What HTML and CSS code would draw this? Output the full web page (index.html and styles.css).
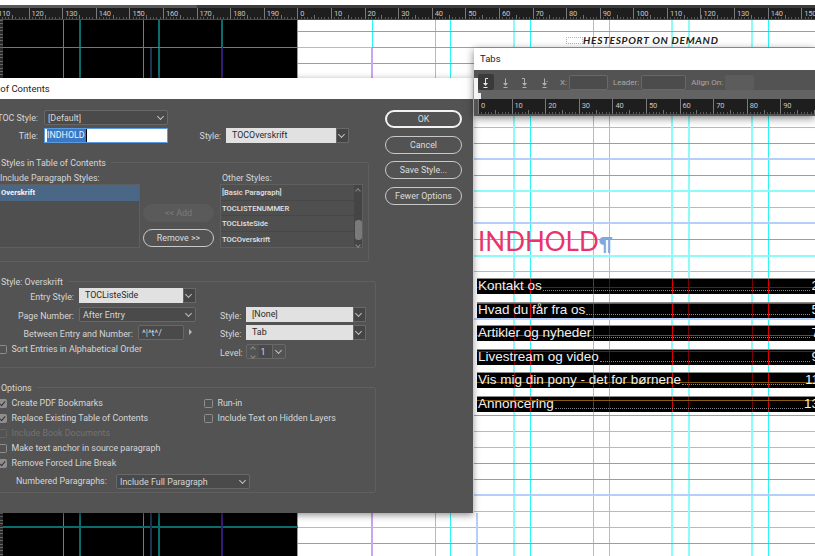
FILE: index.html
```
<!DOCTYPE html>
<html lang="da">
<head>
<meta charset="utf-8">
<title>Table of Contents</title>
<link rel="stylesheet" href="styles.css">
</head>
<body>

<div class="top-strip"></div>
<div class="ruler-cap"></div>
<div class="ruler-row">
  <div class="ruler main-ruler">
    <span class="tick">110</span><span class="tick">120</span><span class="tick">130</span><span class="tick">140</span><span class="tick">150</span><span class="tick">160</span><span class="tick">170</span><span class="tick">180</span><span class="tick">190</span><span class="tick">0</span><span class="tick">10</span><span class="tick">20</span><span class="tick">30</span><span class="tick">40</span><span class="tick">50</span><span class="tick">60</span><span class="tick">70</span><span class="tick">80</span><span class="tick">90</span><span class="tick">100</span><span class="tick">110</span><span class="tick">120</span><span class="tick">130</span><span class="tick">140</span><span class="tick">150</span>
  </div>
</div>

<div class="workspace">
  <div class="side-ruler"></div>
  <div class="pasteboard"></div>
  <div class="page">
    <div class="page-header"><span class="header-frame"></span><span class="header-text">HESTESPORT ON DEMAND</span></div>
    <div class="toc-title">INDHOLD<span class="pilcrow">¶</span></div>
    <div class="toc-row"><span>Kontakt os</span><span class="leader"></span><span>2</span></div>
    <div class="toc-row"><span>Hvad du får fra os</span><span class="leader"></span><span>5</span></div>
    <div class="toc-row"><span>Artikler og nyheder</span><span class="leader"></span><span>7</span></div>
    <div class="toc-row"><span>Livestream og video</span><span class="leader"></span><span>9</span></div>
    <div class="toc-row"><span>Vis mig din pony - det for børnene</span><span class="leader"></span><span>11</span></div>
    <div class="toc-row"><span>Annoncering</span><span class="leader"></span><span>13</span></div>
  </div>
</div>

<!-- layout guides, below the text rows and the windows -->
<svg class="guides" width="815" height="556">
  <path class="g-black-cyan" d="M63.5 20V78M143.5 20V78M63.5 513V556M143.5 513V556M222 47.5H298"/>
  <path class="g-black-teal" d="M80 20V78M159 20V78M222 20V47M80 513V556M159 513V556M3 527H298"/>
  <path class="g-black-navy" d="M151 47V78M151 513V556"/>
  <path class="g-black-purple" d="M222 47V78M222 513V556"/>
  <path class="g-black-magenta" d="M3 47.5H222"/>
  <path class="g-cyan" d="M372.5 20V47M435.5 20V556M450.5 20V556M530.5 20V556M593.5 20V556M609.5 20V556M768.5 20V556M298 47.5H372M474 127.5H815M474 207.5H815M474 271.5H815M474 431.5H815M474 447.5H815M474 511.5H815M298 527.5H815"/>
  <path class="g-cyan-light" d="M514 20V556M672 20V556M689 20V556M752 20V556M474 191H815M474 255.5H815"/>
  <path class="g-blue" d="M298 31.5H815M298 63.5H474M474 143.5H815M474 175.5H815M474 239.5H815M474 415.5H815M474 463.5H815M474 479.5H815M298 543.5H815"/>
  <path class="g-blue-light" d="M474 159H815M474 223H815M474 319H815M474 495H815M477 513V556"/>
  <path class="g-purple" d="M372 47V556"/>
  <path class="g-magenta" d="M372 47.5H815"/>
</svg>

<!-- Table of Contents dialog -->
<div class="dialog">
  <div class="dialog-title">Table of Contents</div>
  <div class="dialog-body">
    <div class="dialog-main">

      <div class="top-row">
        <label class="top-label">TOC Style:</label>
        <div class="select dark title-field">[Default]</div>
      </div>
      <div class="top-row second">
        <label class="top-label">Title:</label>
        <div class="title-input"><span class="selected-text">INDHOLD</span></div>
        <label class="top-style-label">Style:</label>
        <div class="combo title-combo"><span class="combo-text">TOCOverskrift</span><span class="combo-arrow"></span></div>
      </div>

      <div class="group styles-group">
        <div class="group-title">Styles in Table of Contents</div>
        <div class="styles-columns">
          <div class="include-col">
            <div class="list-label">Include Paragraph Styles:</div>
            <div class="list include-list"><div class="list-item picked">Overskrift</div></div>
          </div>
          <div class="move-buttons">
            <div class="button disabled">&lt;&lt; Add</div>
            <div class="button">Remove &gt;&gt;</div>
          </div>
          <div class="other-col">
            <div class="list-label">Other Styles:</div>
            <div class="list other-list">
              <div class="other-items">
                <div class="list-item">[Basic Paragraph]</div>
                <div class="list-item">TOCLISTENUMMER</div>
                <div class="list-item">TOCListeSide</div>
                <div class="list-item">TOCOverskrift</div>
              </div>
              <div class="scrollbar"><span class="scroll-up"></span><span class="scroll-thumb"></span><span class="scroll-down"></span></div>
            </div>
          </div>
        </div>
      </div>

      <div class="group entry-group">
        <div class="group-title">Style: Overskrift</div>
        <div class="entry-grid">
          <div class="entry-row"><label class="entry-label">Entry Style:</label><div class="combo entry-combo"><span class="combo-text">TOCListeSide</span><span class="combo-arrow"></span></div></div>
          <div></div>
          <div class="entry-row"><label class="entry-label">Page Number:</label><div class="select dark page-field">After Entry</div></div>
          <div class="entry-row"><label class="style-label">Style:</label><div class="combo wide-combo"><span class="combo-text">[None]</span><span class="combo-arrow"></span></div></div>
          <div class="entry-row"><label class="between-label">Between Entry and Number:</label><div class="text-field">^|^t^/</div><span class="play"></span></div>
          <div class="entry-row"><label class="style-label">Style:</label><div class="combo wide-combo"><span class="combo-text">Tab</span><span class="combo-arrow"></span></div></div>
          <div class="check-row sort-row"><span class="check"></span>Sort Entries in Alphabetical Order</div>
          <div class="entry-row">
            <label class="style-label">Level:</label>
            <div class="level">
              <span class="level-spin"><span class="spin-up"></span><span class="spin-down"></span></span>
              <span class="level-value">1</span>
              <span class="combo-arrow"></span>
            </div>
          </div>
        </div>
      </div>

      <div class="group options-group">
        <div class="group-title">Options</div>
        <div class="options-grid">
          <div class="check-row"><span class="check on"></span>Create PDF Bookmarks</div>
          <div class="check-row"><span class="check"></span>Run-in</div>
          <div class="check-row"><span class="check on"></span>Replace Existing Table of Contents</div>
          <div class="check-row"><span class="check"></span>Include Text on Hidden Layers</div>
          <div class="check-row off"><span class="check"></span>Include Book Documents</div>
          <div></div>
          <div class="check-row"><span class="check"></span>Make text anchor in source paragraph</div>
          <div></div>
          <div class="check-row"><span class="check on"></span>Remove Forced Line Break</div>
        </div>
        <div class="numbered-row">
          <label>Numbered Paragraphs:</label>
          <div class="select dark numbered-field">Include Full Paragraph</div>
        </div>
      </div>

    </div>
    <div class="dialog-buttons">
      <div class="button default">OK</div>
      <div class="button">Cancel</div>
      <div class="button">Save Style...</div>
      <div class="button">Fewer Options</div>
    </div>
  </div>
</div>

<!-- Tabs panel -->
<div class="tabs-panel">
  <div class="tabs-title">Tabs</div>
  <div class="tabs-body">
    <div class="tabs-tools">
      <span class="tab-icon active"><svg width="16" height="16" viewBox="0 0 16 16"><path d="M10 4.5H7.5V10M5.5 13.5h4"/><path class="head" d="M5 9h5l-2.5 3z"/></svg></span>
      <span class="tab-icon"><svg width="16" height="16" viewBox="0 0 16 16"><path d="M7.5 4.5V10M5.5 13.5h4"/><path class="head" d="M5 9h5l-2.5 3z"/></svg></span>
      <span class="tab-icon"><svg width="16" height="16" viewBox="0 0 16 16"><path d="M5 4.5H7.5V10M5.5 13.5h4"/><path class="head" d="M5 9h5l-2.5 3z"/></svg></span>
      <span class="tab-icon"><svg width="16" height="16" viewBox="0 0 16 16"><path d="M7.5 4.5V10M5.5 13.5h4M9.5 7.5h1"/><path class="head" d="M5 9h5l-2.5 3z"/></svg></span>
      <label class="tabs-x">X:</label><span class="tabs-input x-input"></span>
      <label class="tabs-label">Leader:</label><span class="tabs-input leader-input"></span>
      <label class="tabs-label">Align On:</label><span class="tabs-input align-input"></span>
    </div>
    <div class="tabs-strip"><span class="tab-marker"></span></div>
    <div class="ruler tabs-ruler">
      <span class="tick">0</span><span class="tick">10</span><span class="tick">20</span><span class="tick">30</span><span class="tick">40</span><span class="tick">50</span><span class="tick">60</span><span class="tick">70</span><span class="tick">80</span><span class="tick">90</span>
    </div>
  </div>
</div>

</body>
</html>
```

FILE: styles.css
```
html, body
  {
	margin : 0;
	padding : 0;
  } /*html, body*/
body
  {
	position : relative;
	width : 815px;
	height : 556px;
	overflow : hidden;
	background-color : #FFFFFF;
	font-family : "Roboto", "Liberation Sans", sans-serif;
  } /*body*/

/* top of the document window */
div.top-strip
  {
	height : 5px;
  } /*div.top-strip*/
div.ruler-cap
  {
	height : 3px;
	background : linear-gradient(to right, #585858 197px, #3C3C3C 197px);
  } /*div.ruler-cap*/
div.ruler-row
  {
	height : 12px;
	padding-left : 3px;
	background-color : #4A4A4A;
	overflow : hidden;
  } /*div.ruler-row*/

div.ruler
  {
	display : flex;
	overflow : hidden;
	background-color : #1E1E1E;
	background-image :
		repeating-linear-gradient(to right, #707070 0, #707070 1px, transparent 1px, transparent 16.8px),
		repeating-linear-gradient(to right, #565656 0, #565656 1px, transparent 1px, transparent 3.36px);
	background-repeat : no-repeat;
	background-size : 100% 4px, 100% 2px;
	background-position : left bottom;
  } /*div.ruler*/
div.main-ruler
  {
	height : 10.5px;
	margin-left : -8px;
  } /*div.main-ruler*/
span.tick
  {
	flex : 0 0 33.6px;
	box-sizing : border-box;
	padding-left : 2px;
	border-left : 1px solid #7A7A7A;
	color : #C4C4C4;
	font-size : 7.5px;
	letter-spacing : -0.2px;
	line-height : 11px;
  } /*span.tick*/

div.workspace
  {
	display : flex;
	height : 536px;
  } /*div.workspace*/
div.side-ruler
  {
	width : 3px;
	background-color : #2A2A2A;
	background-image : repeating-linear-gradient(to bottom, #666666 0, #666666 1px, transparent 1px, transparent 3.4px);
  } /*div.side-ruler*/
div.pasteboard
  {
	width : 295px;
	background-color : #000000;
  } /*div.pasteboard*/

div.page
  {
	flex : 1;
	padding-left : 179px;
	background-color : #FFFFFF;
	border-left : 1px solid #7DA0D0;
	margin-left : -1px;
  } /*div.page*/
div.page-header
  {
	position : relative;
	z-index : 1;
	display : flex;
	align-items : center;
	height : 12px;
	margin-top : 14px;
	margin-left : 89px;
	white-space : nowrap;
  } /*div.page-header*/
span.header-frame
  {
	width : 17px;
	height : 7px;
	border : 1px dotted #9DB6DC;
	box-sizing : border-box;
  } /*span.header-frame*/
span.header-text
  {
	font-family : "Lato", sans-serif;
	font-weight : bold;
	font-style : italic;
	font-size : 10.2px;
	letter-spacing : 0.7px;
	color : #222222;
  } /*span.header-text*/

div.toc-title
  {
	position : relative;
	z-index : 1;
	margin-top : 180px;
	height : 52px;
	padding-left : 1px;
	font-family : "Lato", sans-serif;
	font-size : 26px;
	line-height : 30px;
	color : #E8336D;
  } /*div.toc-title*/
span.pilcrow
  {
	font-size : 19px;
	font-weight : bold;
	color : #7FA8E0;
  } /*span.pilcrow*/

div.toc-row
  {
	position : relative;
	z-index : 1;
	display : flex;
	height : 16px;
	margin : 0 -4px 7.5px 0;
	padding-left : 1px;
	font-family : "Liberation Sans", sans-serif;
	font-size : 13.5px;
	line-height : 16px;
	color : #F0F0F0;
	white-space : nowrap;
	--guide : #7A1010;
	--guide-y : 9px;
	background-color : #000000;
	background-image :
		linear-gradient(#8A8A8A, #8A8A8A),
		linear-gradient(var(--guide), var(--guide)),
		linear-gradient(#7A0000, #7A0000),
		linear-gradient(#E00000, #E00000),
		linear-gradient(#E00000, #E00000),
		linear-gradient(#7A0000, #7A0000),
		linear-gradient(#E00000, #E00000),
		linear-gradient(#7A0000, #7A0000),
		linear-gradient(#7A0000, #7A0000),
		linear-gradient(#E00000, #E00000);
	background-repeat : no-repeat;
	background-size : 100% 1px, 100% 1px, 1px 100%, 1px 100%, 1px 100%, 1px 100%, 1px 100%, 1px 100%, 1px 100%, 1px 100%;
	background-position : 0 0, 0 var(--guide-y), 37px 0, 53px 0, 116px 0, 132px 0, 195px 0, 211px 0, 275px 0, 291px 0;
  } /*div.toc-row*/
div.toc-row:nth-child(4) { --guide : #8A5A10; --guide-y : 1px; }
div.toc-row:nth-child(5) { --guide : #6A5010; --guide-y : 10px; }
div.toc-row:nth-child(6) { --guide : #7A1010; --guide-y : 2px; }
div.toc-row:nth-child(7) { --guide : #7A5510; --guide-y : 10px; }
div.toc-row:nth-child(8) { --guide : #8A5A10; --guide-y : 4px; }
span.leader
  {
	flex : 1;
	height : 12px;
	margin : 0 1px;
	border-bottom : 1px dotted #8A8A8A;
  } /*span.leader*/

/* guides */
svg.guides
  {
	position : absolute;
	left : 0;
	top : 0;
	fill : none;
	shape-rendering : crispEdges;
  } /*svg.guides*/
path.g-cyan { stroke : #2CF6F6; stroke-width : 1; }
path.g-cyan-light { stroke : #8FFAFA; stroke-width : 2; }
path.g-blue { stroke : #6CA4F6; stroke-width : 1; }
path.g-blue-light { stroke : #B4CFFA; stroke-width : 2; }
path.g-purple { stroke : #C9A6F2; stroke-width : 2; }
path.g-magenta { stroke : #E070E6; stroke-width : 1; }
path.g-black-cyan { stroke : #0CA8A8; stroke-width : 1; }
path.g-black-teal { stroke : #0A6C6C; stroke-width : 2; }
path.g-black-navy { stroke : #1E3454; stroke-width : 2; }
path.g-black-purple { stroke : #361A78; stroke-width : 2; }
path.g-black-magenta { stroke : #C43AD8; stroke-width : 1; }

/* the dialog */
div.dialog
  {
	position : absolute;
	z-index : 2;
	left : -40px;
	top : 78px;
	width : 513px;
	height : 435px;
	background-color : #535353;
	box-shadow : 0 2px 7px rgba(0, 0, 0, 0.45);
	color : #D6D6D6;
	font-size : 8.9px;
  } /*div.dialog*/
div.dialog-title
  {
	height : 21px;
	padding-left : 15px;
	background-color : #FFFFFF;
	color : #222222;
	font-size : 9.5px;
	line-height : 21px;
  } /*div.dialog-title*/
div.dialog-body
  {
	display : flex;
	padding : 11px 0 0 30px;
  } /*div.dialog-body*/
div.dialog-main
  {
	width : 386px;
  } /*div.dialog-main*/
div.dialog-buttons
  {
	display : flex;
	flex-direction : column;
	gap : 7.5px;
	width : 77px;
	margin-left : 9px;
  } /*div.dialog-buttons*/

div.button
  {
	box-sizing : border-box;
	height : 18px;
	border : 1px solid #C8C8C8;
	border-radius : 9px;
	text-align : center;
	line-height : 17px;
	color : #DCDCDC;
  } /*div.button*/
div.button.default
  {
	border : 2px solid #F2F2F2;
	line-height : 15px;
  } /*div.button.default*/
div.button.disabled
  {
	border-color : #5A5A5A;
	background-color : #5A5A5A;
	color : #7C7C7C;
  } /*div.button.disabled*/

div.top-row
  {
	display : flex;
	align-items : center;
	height : 15px;
  } /*div.top-row*/
div.top-row.second
  {
	margin-top : 3px;
  } /*div.top-row.second*/
label.top-label
  {
	width : 48px;
	margin-right : 6px;
	padding-top : 1px;
	text-align : right;
	white-space : nowrap;
  } /*label.top-label*/
label.top-style-label
  {
	width : 53px;
	margin-right : 5px;
	padding-top : 1px;
	text-align : right;
  } /*label.top-style-label*/

div.select
  {
	position : relative;
	box-sizing : border-box;
	height : 15px;
	padding-left : 3px;
	border : 1px solid #686868;
	border-radius : 2px;
	line-height : 14px;
	white-space : nowrap;
  } /*div.select*/
div.select.dark
  {
	background-color : #4A4A4A;
  } /*div.select.dark*/
div.select:after, span.combo-arrow:after
  {
	content : "";
	position : absolute;
	right : 4px;
	top : 3px;
	width : 4px;
	height : 4px;
	border-right : 1px solid #C0C0C0;
	border-bottom : 1px solid #C0C0C0;
	transform : rotate(45deg);
  } /*div.select:after*/
div.title-field { width : 124px; }
div.page-field { width : 117px; }
div.numbered-field { width : 134px; }

div.title-input
  {
	box-sizing : border-box;
	width : 124px;
	height : 15px;
	padding-left : 2px;
	border : 1px solid #5A9BE0;
	background-color : #FFFFFF;
	line-height : 13px;
  } /*div.title-input*/
span.selected-text
  {
	display : inline-block;
	padding-right : 1px;
	background-color : #3A78C4;
	border-right : 1px solid #000000;
	color : #EAF2FF;
  } /*span.selected-text*/

div.combo
  {
	display : flex;
	height : 15px;
	color : #2A2A2A;
  } /*div.combo*/
span.combo-text
  {
	flex : 1;
	box-sizing : border-box;
	padding-left : 6px;
	background-color : #E1E1E1;
	line-height : 15px;
  } /*span.combo-text*/
span.combo-arrow
  {
	position : relative;
	box-sizing : border-box;
	flex : 0 0 13px;
	border : 1px solid #686868;
	background-color : #454545;
  } /*span.combo-arrow*/
div.title-combo { width : 123px; }
div.entry-combo { width : 117px; }
div.wide-combo { width : 120px; }

div.group
  {
	box-sizing : border-box;
	border : 1px solid #5F5F5F;
	border-radius : 2px;
  } /*div.group*/
div.group-title
  {
	width : fit-content;
	height : 12px;
	margin : -7px 0 0 10px;
	padding-right : 5px;
	background-color : #535353;
	line-height : 15px;
  } /*div.group-title*/

div.styles-group
  {
	width : 379px;
	height : 100px;
	margin-top : 19px;
  } /*div.styles-group*/
div.styles-columns
  {
	display : flex;
	margin : 3px 0 0 8px;
  } /*div.styles-columns*/
div.list-label
  {
	height : 12px;
	line-height : 15px;
	padding-left : 1px;
	white-space : nowrap;
  } /*div.list-label*/
div.list
  {
	box-sizing : border-box;
	height : 64px;
	margin-top : 1px;
	border : 1px solid #5F5F5F;
	background-color : #4F4F4F;
  } /*div.list*/
div.include-col
  {
	width : 141px;
  } /*div.include-col*/
div.move-buttons
  {
	display : flex;
	flex-direction : column;
	gap : 7px;
	width : 71px;
	margin : 33px 0 0 3px;
  } /*div.move-buttons*/
div.other-col
  {
	width : 143px;
	margin-left : 6px;
  } /*div.other-col*/
div.other-col div.list-label
  {
	padding-left : 2px;
  } /*div.other-col div.list-label*/
div.other-list
  {
	display : flex;
  } /*div.other-list*/
div.other-items
  {
	flex : 1;
  } /*div.other-items*/
div.list-item
  {
	height : 15.5px;
	padding-left : 1px;
	box-sizing : border-box;
	border-bottom : 1px solid #474747;
	font-size : 7.6px;
	font-weight : 500;
	line-height : 15px;
	color : #E2E2E2;
  } /*div.list-item*/
div.list-item:last-child
  {
	border-bottom : none;
  } /*div.list-item:last-child*/
div.list-item.picked
  {
	background-color : #4A6886;
	border-bottom : none;
	font-weight : bold;
	color : #F4F4F4;
  } /*div.list-item.picked*/

div.scrollbar
  {
	position : relative;
	display : flex;
	flex-direction : column;
	align-items : center;
	width : 8px;
	background-color : #454545;
  } /*div.scrollbar*/
span.scroll-thumb
  {
	width : 7px;
	height : 21px;
	margin-top : 27px;
	border-radius : 3px;
	background-color : #7A7A7A;
  } /*span.scroll-thumb*/
span.scroll-up, span.scroll-down, span.spin-up, span.spin-down
  {
	width : 3px;
	height : 3px;
	border-left : 1px solid #8A8A8A;
	border-top : 1px solid #8A8A8A;
	transform : rotate(45deg);
  } /*span.scroll-up*/
span.scroll-up
  {
	margin-top : 4px;
  } /*span.scroll-up*/
span.scroll-down, span.spin-down
  {
	transform : rotate(225deg);
  } /*span.scroll-down*/
span.scroll-down
  {
	margin-top : 3px;
  } /*span.scroll-down*/

div.entry-group
  {
	height : 87px;
	margin-top : 19px;
  } /*div.entry-group*/
div.entry-grid
  {
	display : grid;
	grid-template-columns : 229px 1fr;
	grid-template-rows : 19px 18px 19px 15px;
	margin-top : 1px;
  } /*div.entry-grid*/
div.entry-row
  {
	display : flex;
	align-items : flex-start;
  } /*div.entry-row*/
label.entry-label, label.between-label, label.style-label
  {
	flex : none;
	height : 15px;
	margin-right : 5px;
	text-align : right;
	line-height : 19px;
	white-space : nowrap;
  } /*label.entry-label*/
label.entry-label { width : 83px; }
label.between-label { width : 142px; }
label.style-label { width : 21px; }

div.text-field
  {
	box-sizing : border-box;
	width : 46px;
	height : 15px;
	padding-left : 3px;
	border : 1px solid #686868;
	border-radius : 2px;
	background-color : #4A4A4A;
	line-height : 14px;
  } /*div.text-field*/
span.play
  {
	width : 0;
	height : 0;
	margin : 4px 0 0 5px;
	border-left : 3px solid #B8B8B8;
	border-top : 3px solid transparent;
	border-bottom : 3px solid transparent;
  } /*span.play*/

div.level
  {
	display : flex;
	box-sizing : border-box;
	width : 40px;
	height : 15px;
	border : 1px solid #686868;
	border-radius : 2px;
  } /*div.level*/
span.level-spin
  {
	display : flex;
	flex-direction : column;
	align-items : center;
	gap : 3px;
	width : 12px;
	padding-top : 2px;
  } /*span.level-spin*/
span.level-value
  {
	width : 14px;
	padding-left : 2px;
	box-sizing : border-box;
	background-color : #4A4A4A;
	line-height : 14px;
  } /*span.level-value*/
div.level span.combo-arrow
  {
	border-width : 0 0 0 1px;
	background-color : transparent;
  } /*div.level span.combo-arrow*/

div.check-row
  {
	display : flex;
	align-items : center;
	height : 15px;
	white-space : nowrap;
	line-height : 17px;
  } /*div.check-row*/
div.check-row.off
  {
	color : #727272;
  } /*div.check-row.off*/
div.check-row.sort-row
  {
	padding-left : 7px;
	align-self : start;
	margin-top : -2px;
  } /*div.check-row.sort-row*/
span.check
  {
	position : relative;
	box-sizing : border-box;
	flex : none;
	width : 9px;
	height : 9px;
	margin-right : 4.5px;
	border : 1px solid #8E8E8E;
	border-radius : 1.5px;
  } /*span.check*/
div.check-row.off span.check
  {
	border-color : #646464;
  } /*div.check-row.off span.check*/
span.check.on
  {
	background-color : #8E8E8E;
  } /*span.check.on*/
span.check.on:after
  {
	content : "";
	position : absolute;
	left : 2px;
	top : 0;
	width : 2px;
	height : 5px;
	border-right : 1px solid #333333;
	border-bottom : 1px solid #333333;
	transform : rotate(40deg);
  } /*span.check.on:after*/

div.options-group
  {
	height : 106px;
	margin-top : 19px;
  } /*div.options-group*/
div.options-grid
  {
	display : grid;
	grid-template-columns : 206px 1fr;
	grid-auto-rows : 15px;
	margin : 2.5px 0 0 7px;
  } /*div.options-grid*/
div.numbered-row
  {
	display : flex;
	align-items : center;
	height : 15px;
	margin : 3.5px 0 0 25px;
	line-height : 17px;
  } /*div.numbered-row*/
div.numbered-row label
  {
	width : 92px;
	margin-right : 8px;
	white-space : nowrap;
  } /*div.numbered-row label*/

/* Tabs panel */
div.tabs-panel
  {
	position : absolute;
	z-index : 2;
	left : 474px;
	top : 48px;
	width : 341px;
	box-shadow : 0 2px 8px rgba(0, 0, 0, 0.5);
  } /*div.tabs-panel*/
div.tabs-panel:before
  {
	content : "";
	position : absolute;
	left : 0;
	top : 30px;
	width : 4px;
	height : 21px;
	background-color : #F4F4F4;
  } /*div.tabs-panel:before*/
div.tabs-title
  {
	height : 22px;
	padding-left : 6px;
	background-color : #FFFFFF;
	color : #222222;
	font-size : 9.5px;
	line-height : 22px;
  } /*div.tabs-title*/
div.tabs-body
  {
	height : 46px;
	padding-left : 4px;
	background-color : #535353;
  } /*div.tabs-body*/
div.tabs-tools
  {
	display : flex;
	align-items : center;
	height : 16px;
	padding-top : 4px;
	color : #A8A8A8;
	font-size : 8px;
	white-space : nowrap;
  } /*div.tabs-tools*/
span.tab-icon
  {
	width : 16px;
	height : 16px;
	margin-right : 3.5px;
	border-radius : 2px;
  } /*span.tab-icon*/
span.tab-icon.active
  {
	background-color : #3A3A3A;
  } /*span.tab-icon.active*/
span.tab-icon svg
  {
	display : block;
	fill : none;
	stroke : #B0B0B0;
  } /*span.tab-icon svg*/
span.tab-icon svg path.head
  {
	fill : #B0B0B0;
	stroke : none;
  } /*span.tab-icon svg path.head*/
span.tab-icon.active svg
  {
	stroke : #E8E8E8;
  } /*span.tab-icon.active svg*/
span.tab-icon.active svg path.head
  {
	fill : #E8E8E8;
  } /*span.tab-icon.active svg path.head*/
label.tabs-x
  {
	margin : 0 2px 0 4px;
  } /*label.tabs-x*/
label.tabs-label
  {
	margin : 0 2px 0 5px;
  } /*label.tabs-label*/
span.tabs-input
  {
	box-sizing : border-box;
	height : 15px;
	border : 1px solid #686868;
	border-radius : 2px;
	background-color : #4C4C4C;
  } /*span.tabs-input*/
span.x-input { width : 39px; }
span.leader-input { width : 45px; }
span.align-input
  {
	width : 29px;
	border-color : #5C5C5C;
	background-color : #5C5C5C;
  } /*span.align-input*/
div.tabs-strip
  {
	position : relative;
	height : 9px;
	background-color : #636363;
  } /*div.tabs-strip*/
span.tab-marker
  {
	position : absolute;
	left : 0;
	bottom : 0;
	width : 3px;
	height : 6px;
	background-color : #F0F0F0;
  } /*span.tab-marker*/
div.tabs-ruler
  {
	height : 15px;
	background-size : 100% 4px, 100% 2px;
  } /*div.tabs-ruler*/
div.tabs-ruler span.tick
  {
	line-height : 14px;
  } /*div.tabs-ruler span.tick*/
```
